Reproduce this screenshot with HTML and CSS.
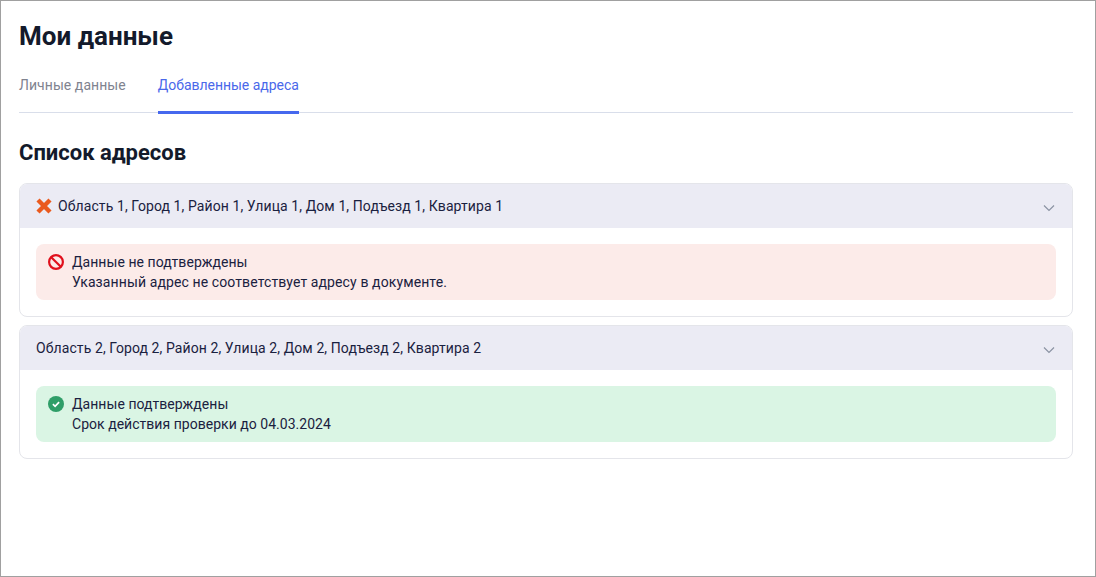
FILE: index.html
```html
<!DOCTYPE html>
<html lang="ru">
<head>
<meta charset="utf-8">
<title>Мои данные</title>
<link rel="stylesheet" href="styles.css">
</head>
<body>
<main class="page">
  <h1 class="title">Мои данные</h1>
  <nav class="tabs">
    <a class="tab">Личные данные</a>
    <a class="tab tab-active">Добавленные адреса</a>
  </nav>
  <h2 class="subtitle">Список адресов</h2>
  <section class="card">
    <header class="card-head">
      <svg class="mark" width="16" height="16" viewBox="0 0 16 16"><path d="M2 2 14 14M14 2 2 14" stroke="#ea5a1e" stroke-width="4.4" fill="none"/></svg>
      <span class="addr">Область 1, Город 1, Район 1, Улица 1, Дом 1, Подъезд 1, Квартира 1</span>
      <svg class="chev" width="12" height="8" viewBox="0 0 12 8"><path d="M1 1.5 6 6.5 11 1.5" stroke="#8b93a3" stroke-width="1.2" fill="none"/></svg>
    </header>
    <div class="card-body">
      <div class="note note-error">
        <svg class="note-icon" width="16" height="16" viewBox="0 0 16 16"><circle cx="8" cy="8" r="6.9" stroke="#e0101c" stroke-width="2.2" fill="none"/><path d="M3.2 3.2 12.8 12.8" stroke="#e0101c" stroke-width="2.2"/></svg>
        <div class="note-text"><div class="note-title">Данные не подтверждены</div><div class="note-desc">Указанный адрес не соответствует адресу в документе.</div></div>
      </div>
    </div>
  </section>
  <section class="card">
    <header class="card-head">
      <span class="addr">Область 2, Город 2, Район 2, Улица 2, Дом 2, Подъезд 2, Квартира 2</span>
      <svg class="chev" width="12" height="8" viewBox="0 0 12 8"><path d="M1 1.5 6 6.5 11 1.5" stroke="#8b93a3" stroke-width="1.2" fill="none"/></svg>
    </header>
    <div class="card-body">
      <div class="note note-ok">
        <svg class="note-icon" width="16" height="16" viewBox="0 0 16 16"><circle cx="8" cy="8" r="8" fill="#2f9e68"/><path d="M4.9 8.2 7.1 10.3 11.1 6.1" stroke="#fff" stroke-width="1.7" fill="none"/></svg>
        <div class="note-text"><div class="note-title">Данные подтверждены</div><div class="note-desc">Срок действия проверки до 04.03.2024</div></div>
      </div>
    </div>
  </section>
</main>
</body>
</html>
```
FILE: styles.css
```css
* { box-sizing: border-box; }
html, body { margin: 0; height: 100%; }
body { background: #fff; font-family: Roboto, "Liberation Sans", sans-serif; color: #1a2140; }
.page { height: 577px; border: 1px solid #a0a0a0; padding: 19px 22px 0 18px; overflow: hidden; }
.title { margin: 0; font-size: 26px; line-height: 32px; font-weight: 700; color: #131a2b; }
.tabs { display: flex; gap: 32px; margin-top: 12px; border-bottom: 1px solid #d9deea; height: 49px; }
.tab { font-size: 14px; line-height: 20px; padding-top: 11px; color: #80838f; height: 50px; letter-spacing: 0.06px; }
.tab-active { color: #4a68ea; border-bottom: 3px solid #4668ee; letter-spacing: -0.03px; }
.subtitle { margin: 26px 0 0; font-size: 22px; line-height: 28px; font-weight: 700; color: #131a2b; }
.card { margin-top: 16px; border: 1px solid #e4e5ea; border-radius: 8px; overflow: hidden; }
.card + .card { margin-top: 8px; }
.card-head { display: flex; align-items: center; height: 44px; padding: 0 16px; background: #ebebf4; }
.mark { margin-right: 6px; flex: none; }
.addr { font-size: 14px; line-height: 20px; flex: 1; letter-spacing: 0.09px; }
.chev { flex: none; margin-right: 1px; margin-top: 3px; }
.card-body { padding: 16px; }
.note { display: flex; gap: 8px; padding: 8px 12px; border-radius: 8px; font-size: 14px; line-height: 20px; }
.note-title { letter-spacing: 0.05px; }
.note-error .note-desc { letter-spacing: 0.11px; }
.note-ok .note-desc { letter-spacing: 0.03px; }
.note-icon { flex: none; margin-top: 2px; }
.note-error { background: #fcebe9; }
.note-ok { background: #daf5e4; }
```
